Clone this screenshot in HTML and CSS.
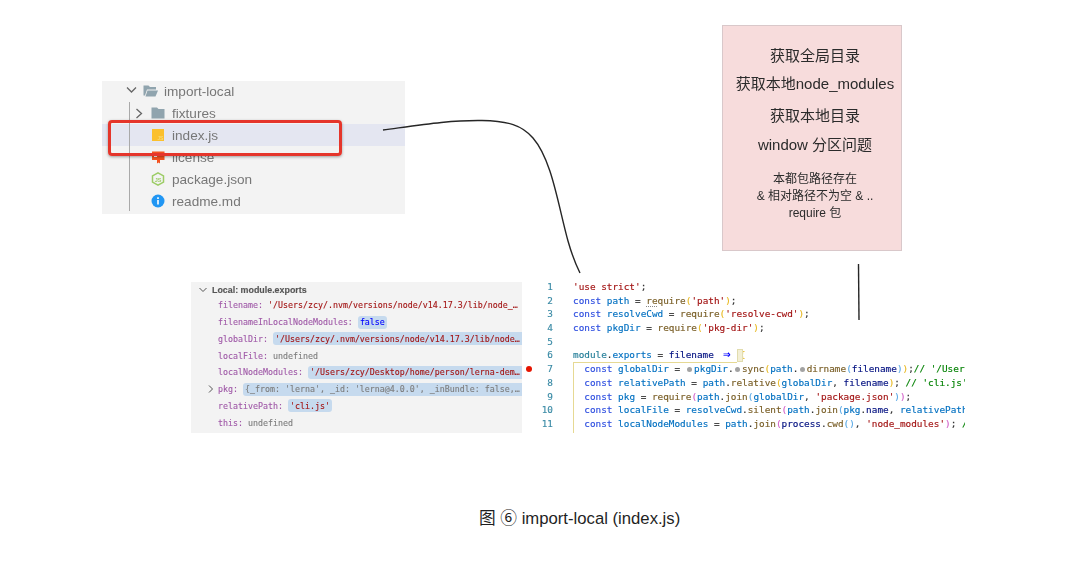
FILE: index.html
```html
<!DOCTYPE html>
<html lang="zh-CN">
<head>
<meta charset="utf-8">
<title>import-local (index.js)</title>
<link rel="stylesheet" href="styles.css">
</head>
<body>
<main class="canvas">
  <section class="explorer">
    <div class="guide"></div>
    <div class="tree-row root">
      <svg class="twist" viewBox="0 0 18 22"><path d="M3 7.500l4.500 4.500 4.500-4.500"/></svg>
      <svg class="ico" viewBox="0 0 16 16"><path fill="#90a4ae" d="M1.500 2.500h5l1.500 1.500H14v2.500H5L3 12.500H1.500z"/><path fill="#90a4ae" d="M5.500 7.500H16L13.500 13.500H3.500z"/></svg>
      <span>import-local</span>
    </div>
    <div class="tree-row child">
      <svg class="twist" viewBox="0 0 18 22"><path d="M4.500 7l5 4.500-5 4.500"/></svg>
      <svg class="ico" viewBox="0 0 16 16"><path fill="#90a4ae" d="M1.500 2.500h5.500l1.500 1.500H14.500V13.500H1.500z"/></svg>
      <span>fixtures</span>
    </div>
    <div class="tree-row child selected">
      <span class="twist"></span>
      <svg class="ico" viewBox="0 0 16 16"><rect x="2" y="2" width="12" height="12" fill="#fbc02d"/><text x="7.500" y="12.500" class="js-mark">JS</text></svg>
      <span>index.js</span>
    </div>
    <div class="tree-row child">
      <span class="twist"></span>
      <svg class="ico" viewBox="0 0 16 16"><rect x="2" y="2.500" width="12.500" height="8.500" fill="#f4511e"/><path fill="#fff" d="M4 4.500h3v1H4zM9 4.500h3.500v1H9zM4 7h3v1H4z"/><path fill="#f4511e" d="M7 10h3v4.500l-1.500-1-1.500 1z"/></svg>
      <span>license</span>
    </div>
    <div class="tree-row child">
      <span class="twist"></span>
      <svg class="ico" viewBox="0 0 16 16"><path fill="none" stroke="#9ccc65" stroke-width="1.500" d="M8 1.800l5.500 3.100v6.200L8 14.200l-5.500-3.100V4.900z"/><text x="8" y="10.500" class="node-mark">JS</text></svg>
      <span>package.json</span>
    </div>
    <div class="tree-row child">
      <span class="twist"></span>
      <svg class="ico" viewBox="0 0 16 16"><circle cx="8" cy="8" r="6.500" fill="#2196f3"/><path fill="#fff" d="M7.200 7h1.600v4.500H7.200zM7.200 4.300h1.600v1.600H7.200z"/></svg>
      <span>readme.md</span>
    </div>
  </section>
  <div class="red-box"></div>

  <svg class="connectors" viewBox="0 0 1080 564">
    <path d="M383 130C420 125 450 120 482 120.500C508 121 522 125 533 138C552 160 558 205 568 241C572 255 576 265 580 273"/>
    <path d="M858.500 264L859 320"/>
  </svg>

  <section class="note">
    <p class="n1">获取全局目录</p>
    <p class="n2">获取本地node_modules</p>
    <p class="n3">获取本地目录</p>
    <p class="n4">window 分区问题</p>
    <p class="n5">本都包路径存在<br>&amp; 相对路径不为空 &amp; ..<br>require 包</p>
  </section>

  <section class="vars">
    <div class="vars-head">
      <svg class="vars-chev" viewBox="0 0 10 10"><path d="M1.500 3l3.500 3.500L8.500 3"/></svg>
      <span>Local: module.exports</span>
    </div>
    <div class="var"><span class="k">filename:</span> <span class="s">'/Users/zcy/.nvm/versions/node/v14.17.3/lib/node_…</span></div>
    <div class="var"><span class="k">filenameInLocalNodeModules:</span> <span class="hl b">false</span></div>
    <div class="var"><span class="k">globalDir:</span> <span class="hl fill s">'/Users/zcy/.nvm/versions/node/v14.17.3/lib/node…</span></div>
    <div class="var"><span class="k">localFile:</span> <span class="u">undefined</span></div>
    <div class="var"><span class="k">localNodeModules:</span> <span class="hl fill s">'/Users/zcy/Desktop/home/person/lerna-dem…</span></div>
    <div class="var has-chev">
      <svg class="var-chev" viewBox="0 0 10 10"><path d="M3 1.500L6.500 5 3 8.500"/></svg>
      <span class="k">pkg:</span> <span class="hl fill u">{_from: 'lerna', _id: 'lerna@4.0.0', _inBundle: false,…</span>
    </div>
    <div class="var"><span class="k">relativePath:</span> <span class="hl s">'cli.js'</span></div>
    <div class="var"><span class="k">this:</span> <span class="u">undefined</span></div>
  </section>

  <section class="code">
    <div class="indent-box"></div>
    <div class="match-box"></div>
    <div class="breakpoint"></div>
    <div class="ln"><span class="num">1</span><code><span class="s">'use strict'</span>;</code></div>
    <div class="ln"><span class="num">2</span><code><span class="c">const</span> <span class="i">path</span> = <span class="f"><span class="hint">re</span>quire</span><span class="y">(</span><span class="s">'path'</span><span class="y">)</span>;</code></div>
    <div class="ln"><span class="num">3</span><code><span class="c">const</span> <span class="i">resolveCwd</span> = <span class="f">require</span><span class="y">(</span><span class="s">'resolve-cwd'</span><span class="y">)</span>;</code></div>
    <div class="ln"><span class="num">4</span><code><span class="c">const</span> <span class="i">pkgDir</span> = <span class="f">require</span><span class="y">(</span><span class="s">'pkg-dir'</span><span class="y">)</span>;</code></div>
    <div class="ln"><span class="num">5</span><code> </code></div>
    <div class="ln"><span class="num">6</span><code><span class="t">module</span>.<span class="i">exports</span> = <span class="v">filename</span> <span class="arrow">⇒</span> <span class="y">{</span></code></div>
    <div class="ln"><span class="num">7</span><code>  <span class="c">const</span> <span class="i">globalDir</span> = <span class="dot"></span><span class="i">pkgDir</span>.<span class="dot"></span><span class="f">sync</span><span class="y">(</span><span class="i">path</span>.<span class="dot"></span><span class="f">dirname</span><span class="p">(</span><span class="v">filename</span><span class="p">)</span><span class="y">)</span>;<span class="g">// '/User</span></code></div>
    <div class="ln"><span class="num">8</span><code>  <span class="c">const</span> <span class="i">relativePath</span> = <span class="i">path</span>.<span class="f">relative</span><span class="y">(</span><span class="i">globalDir</span>, <span class="v">filename</span><span class="y">)</span>; <span class="g">// 'cli.js'</span></code></div>
    <div class="ln"><span class="num">9</span><code>  <span class="c">const</span> <span class="i">pkg</span> = <span class="f">require</span><span class="m">(</span><span class="i">path</span>.<span class="f">join</span><span class="p">(</span><span class="i">globalDir</span>, <span class="s">'package.json'</span><span class="p">)</span><span class="m">)</span>;</code></div>
    <div class="ln"><span class="num">10</span><code>  <span class="c">const</span> <span class="i">localFile</span> = <span class="i">resolveCwd</span>.<span class="f">silent</span><span class="m">(</span><span class="i">path</span>.<span class="f">join</span><span class="p">(</span><span class="i">pkg</span>.<span class="v">name</span>, <span class="i">relativePath</span></code></div>
    <div class="ln"><span class="num">11</span><code>  <span class="c">const</span> <span class="i">localNodeModules</span> = <span class="i">path</span>.<span class="f">join</span><span class="m">(</span><span class="v">process</span>.<span class="f">cwd</span><span class="p">()</span>, <span class="s">'node_modules'</span><span class="m">)</span>; <span class="g">/</span></code></div>
  </section>

  <p class="caption">图 ⑥ import-local (index.js)</p>
</main>
</body>
</html>
```
FILE: styles.css
```css
* { box-sizing: border-box; }
html, body { margin: 0; padding: 0; background: #fff; }
.canvas {
  position: relative;
  width: 1080px;
  height: 564px;
  overflow: hidden;
  background: #fff;
  font-family: "Liberation Sans", "Noto Sans CJK SC", sans-serif;
}

/* file explorer */
.explorer {
  position: absolute;
  left: 102px;
  top: 81px;
  width: 303px;
  height: 133px;
  background: #f3f3f3;
  color: #777;
  font-size: 13.600px;
  filter: blur(.5px);
}
.guide {
  position: absolute;
  left: 27px;
  top: 21px;
  width: 1px;
  height: 109px;
  background: #a9a9a9;
}
.tree-row {
  display: flex;
  align-items: center;
  height: 22px;
}
.root { padding-left: 22px; margin-top: -1px; }
.child { padding-left: 30px; }
.selected { background: #e4e6f1; }
.twist { flex: none; width: 18px; height: 22px; }
.twist path { fill: none; stroke: #666; stroke-width: 1.300; }
.ico { flex: none; width: 16px; height: 16px; margin-right: 6px; }
.js-mark { font: 5px "Liberation Sans", sans-serif; fill: #f7e28b; }
.node-mark { font: bold 5.500px "Liberation Sans", sans-serif; fill: #9ccc65; text-anchor: middle; }

.red-box {
  position: absolute;
  left: 108px;
  top: 120px;
  width: 234px;
  height: 36px;
  border: 3px solid #e5352b;
  border-radius: 4px;
  box-shadow: 0 1px 3px rgba(0, 0, 0, .35);
}

.connectors {
  position: absolute;
  left: 0;
  top: 0;
  width: 1080px;
  height: 564px;
  pointer-events: none;
}
.connectors path { fill: none; stroke: #262626; stroke-width: 1.400; }

/* pink note */
.note {
  position: absolute;
  left: 722px;
  top: 25px;
  width: 180px;
  height: 226px;
  padding: 21px 0 0 6px;
  background: #f7dcdc;
  border: 1px solid #d9c8ca;
  color: #2b2b2b;
  font-size: 15px;
  text-align: center;
  filter: blur(.35px);
}
.note p { margin: 0; line-height: 18px; white-space: nowrap; }
.n2 { margin-top: 10px !important; }
.n3 { margin-top: 14px !important; }
.n4 { margin-top: 11px !important; }
.n5 { margin-top: 17px !important; font-size: 12px; line-height: 17px !important; }

/* debug variables */
.vars {
  position: absolute;
  left: 191px;
  top: 282px;
  width: 331px;
  height: 151px;
  background: #f3f3f3;
  overflow: hidden;
  font-family: "DejaVu Sans Mono", monospace;
  font-size: 8.300px;
  -webkit-text-stroke: .12px currentColor;
  filter: blur(.4px);
}
.vars-head {
  display: flex;
  align-items: center;
  height: 15px;
  padding-left: 7px;
  font: bold 8.900px "Liberation Sans", sans-serif;
  color: #555;
}
.vars-chev { width: 10px; height: 10px; margin-right: 4px; }
.vars-chev path, .var-chev path { fill: none; stroke: #555; stroke-width: 1; }
.var {
  position: relative;
  display: flex;
  align-items: center;
  gap: 5px;
  height: 16.750px;
  padding-left: 27px;
  white-space: pre;
}
.var-chev { position: absolute; left: 15px; top: 3px; width: 10px; height: 10px; }
.k { color: #a05aa8; }
.s { color: #a31515; }
.b { color: #0000ff; }
.u { color: #7d7d7d; }
.hl {
  padding: 1.500px 2px;
  border-radius: 3px;
  background: #c6daee;
}
.fill { flex: 1; overflow: hidden; border-radius: 3px 0 0 3px; }

/* code */
.code {
  position: absolute;
  left: 525px;
  top: 280px;
  width: 440px;
  height: 153px;
  overflow: hidden;
  font-family: "DejaVu Sans Mono", monospace;
  font-size: 9.370px;
  color: #333;
  -webkit-text-stroke: .15px currentColor;
  filter: blur(.35px);
}
.ln { display: flex; height: 13.700px; line-height: 13.700px; white-space: pre; }
.num { flex: none; width: 28px; text-align: right; color: #3a8aa5; }
code { margin-left: 20px; font: inherit; }
.c { color: #2f4fe0; }
.i { color: #0070c1; }
.f { color: #795e26; }
.v { color: #001080; }
.t { color: #267f99; }
.g { color: #008000; }
.y { color: #e8b923; }
.p { color: #5aa9e6; }
.m { color: #d25fc8; }
.arrow {
  display: inline-block;
  width: 2ch;
  line-height: 0;
  color: #0000ff;
  text-align: center;
  font-size: 12px;
  font-weight: bold;
}
.hint { text-decoration: underline dotted #888; text-underline-offset: 2px; }
.dot {
  display: inline-block;
  width: 5px;
  height: 5px;
  margin: 0 1.700px;
  border-radius: 50%;
  background: #a3a3a3;
  vertical-align: 0;
}
.indent-box {
  position: absolute;
  left: 48px;
  top: 82px;
  width: 164px;
  height: 71px;
  border-top: 1px solid #e6d993;
  border-left: 1px solid #e6d993;
}
.match-box {
  position: absolute;
  left: 212px;
  top: 69px;
  width: 6px;
  height: 13px;
  background: #f3efd5;
  border: 1px solid #e1dcae;
}
.breakpoint {
  position: absolute;
  left: 1px;
  top: 86px;
  width: 6px;
  height: 6px;
  border-radius: 50%;
  background: #e51400;
}

.caption {
  position: absolute;
  left: 479px;
  top: 509px;
  margin: 0;
  font-size: 16.700px;
  line-height: 20px;
  color: #1f1f1f;
  white-space: nowrap;
}
```
